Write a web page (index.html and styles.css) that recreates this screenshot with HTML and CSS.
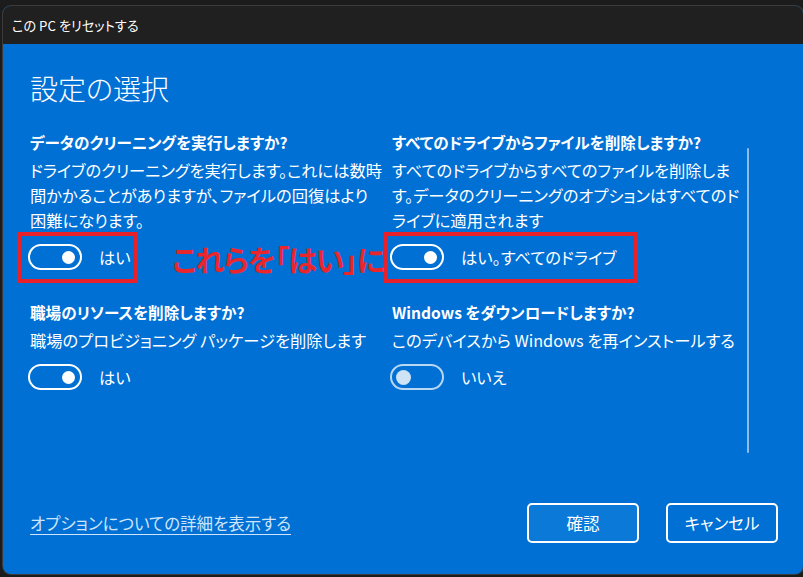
FILE: index.html
```html
<!DOCTYPE html>
<html lang="ja">
<head>
<meta charset="utf-8">
<title>この PC をリセットする</title>
<link rel="stylesheet" href="styles.css">
</head>
<body>
<div class="window">
  <div class="titlebar">この PC をリセットする</div>
  <div class="content">
    <h1 class="page-title">設定の選択</h1>
    <div class="options">
      <div class="grid">
        <section class="setting">
          <h2 class="setting-title">データのクリーニングを実行しますか?</h2>
          <p class="setting-desc">ドライブのクリーニングを実行します。これには数時<br>間かかることがありますが、ファイルの回復はより<br>困難になります。</p>
          <div class="toggle-row">
            <span class="toggle on"><span class="thumb"></span></span>
            <span class="toggle-label">はい</span>
          </div>
        </section>
        <section class="setting">
          <h2 class="setting-title">すべてのドライブからファイルを削除しますか?</h2>
          <p class="setting-desc">すべてのドライブからすべてのファイルを削除しま<br>す。データのクリーニングのオプションはすべてのド<br>ライブに適用されます</p>
          <div class="toggle-row">
            <span class="toggle on"><span class="thumb"></span></span>
            <span class="toggle-label">はい。すべてのドライブ</span>
          </div>
        </section>
        <section class="setting">
          <h2 class="setting-title">職場のリソースを削除しますか?</h2>
          <p class="setting-desc">職場のプロビジョニング パッケージを削除します</p>
          <div class="toggle-row">
            <span class="toggle on"><span class="thumb"></span></span>
            <span class="toggle-label">はい</span>
          </div>
        </section>
        <section class="setting">
          <h2 class="setting-title">Windows をダウンロードしますか?</h2>
          <p class="setting-desc">このデバイスから Windows を再インストールする</p>
          <div class="toggle-row">
            <span class="toggle off"><span class="thumb"></span></span>
            <span class="toggle-label">いいえ</span>
          </div>
        </section>
      </div>
      <div class="scrollbar"></div>
    </div>
    <div class="footer">
      <a class="more-link" href="#">オプションについての詳細を表示する</a>
      <div class="buttons">
        <button class="btn primary">確認</button>
        <button class="btn">キャンセル</button>
      </div>
    </div>
  </div>
  <div class="mark mark-left"></div>
  <div class="mark mark-right"></div>
  <div class="mark-note">これらを「はい」に</div>
</div>
</body>
</html>
```
FILE: styles.css
```css
* {
  box-sizing: border-box;
  margin: 0;
  padding: 0;
}

html, body {
  height: 100%;
}

body {
  background: #1c1c1c;
  font-family: "Noto Sans CJK JP", "Noto Sans", sans-serif;
  font-feature-settings: "palt";
  color: #fff;
  padding: 6px 0 0 3px;
  overflow: hidden;
}

.window {
  position: relative;
  width: 800px;
  height: 568px;
  border-radius: 8px;
  background: #0070d4;
  box-shadow: 0 0 0 1px #3b3b3b;
  overflow: hidden;
  display: flex;
  flex-direction: column;
}

.titlebar {
  height: 38px;
  flex: none;
  background: #202020;
  display: flex;
  align-items: center;
  padding-left: 9px;
  font-size: 13.2px;
  color: #fff;
}

.content {
  flex: 1;
  display: flex;
  flex-direction: column;
  padding: 24px 25px 31px 27px;
}

.page-title {
  font-size: 28px;
  font-weight: 300;
  line-height: 40px;
}

.options {
  display: flex;
  align-items: flex-start;
  margin-top: 22px;
}

.grid {
  display: grid;
  grid-template-columns: 362px 352px;
  row-gap: 29px;
}

.setting-title {
  font-size: 15.6px;
  font-weight: 700;
  line-height: 24px;
  white-space: nowrap;
}

.setting-desc {
  margin-top: 4px;
  font-size: 16.3px;
  line-height: 25px;
  white-space: nowrap;
}

.toggle-row {
  margin-top: 10px;
  height: 28px;
  display: flex;
  align-items: center;
  gap: 17px;
  font-size: 16.3px;
}

.toggle {
  width: 54px;
  height: 26px;
  border-radius: 13px;
  border: 2px solid #fff;
  display: flex;
  align-items: center;
  margin-left: -2px;
}

.thumb {
  width: 13px;
  height: 13px;
  border-radius: 50%;
  background: #fff;
}

.toggle.on .thumb {
  margin-left: auto;
  margin-right: 5px;
}

.toggle.off {
  border-color: rgba(255, 255, 255, 0.72);
}

.toggle.off .thumb {
  margin-left: 5px;
  background: #cfe3f7;
  box-shadow: 0 0 0 1px rgba(255, 255, 255, 0.8);
}

.scrollbar {
  width: 2px;
  height: 305px;
  margin: 18px 0 0 3px;
  background: rgba(255, 255, 255, 0.55);
  border-radius: 1px;
}

.footer {
  margin-top: auto;
  display: flex;
  align-items: center;
  justify-content: space-between;
}

.more-link {
  font-size: 16.5px;
  color: #cde4fa;
  text-decoration: underline;
  text-underline-offset: 4px;
}

.buttons {
  display: flex;
  gap: 27px;
}

.btn {
  width: 112px;
  height: 40px;
  border: 2px solid #fff;
  border-radius: 5px;
  background: #0070d4;
  color: #fff;
  font-family: inherit;
  font-feature-settings: "palt";
  font-size: 16.5px;
}

.btn.primary {
  background: #0a79d8;
}

/* red callouts drawn over the toggles */
.mark {
  position: absolute;
  top: 226px;
  height: 51px;
  border: 4px solid #e8202a;
}

.mark-left {
  left: 14px;
  width: 121px;
}

.mark-right {
  left: 381px;
  width: 254px;
}

.mark-note {
  position: absolute;
  left: 169px;
  top: 235px;
  font-size: 29px;
  line-height: 36px;
  letter-spacing: -1px;
  font-weight: 700;
  color: #e8262c;
  white-space: nowrap;
}
```
